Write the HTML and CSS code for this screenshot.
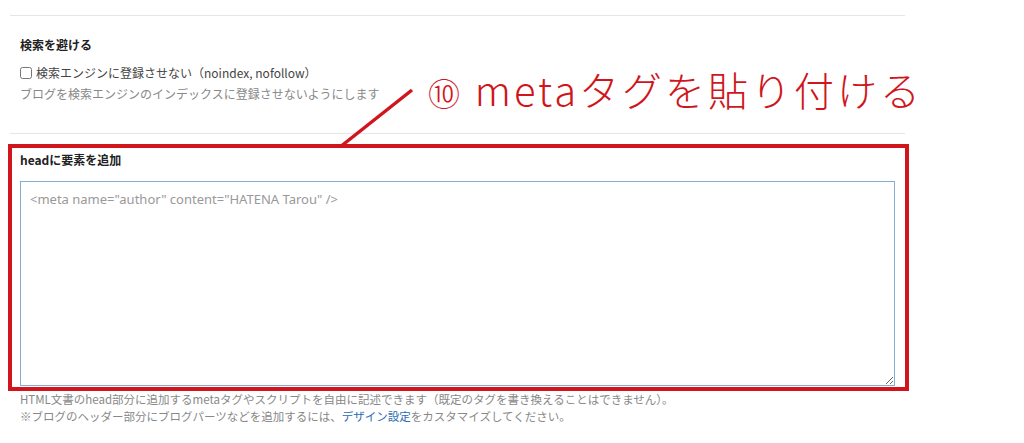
FILE: index.html
```html
<!DOCTYPE html>
<html>
  <head>
    <title>詳細設定</title>
    <link rel="stylesheet" href="styles.css">
  </head>
  <body>
    <div class="page">
      <hr class="divider" />
      <div class="section">
        <h3 class="sectionTitle">検索を避ける</h3>
        <label class="checkRow">
          <input type="checkbox" name="noindex" />
          検索エンジンに登録させない（noindex, nofollow）
        </label>
        <p class="help">ブログを検索エンジンのインデックスに登録させないようにします</p>
      </div>
      <hr class="divider divider2" />
      <div class="highlight">
        <h3 class="sectionTitle headTitle">headに要素を追加</h3>
        <textarea class="headArea" name="head" placeholder='<meta name="author" content="HATENA Tarou" />'></textarea>
      </div>
      <div class="notes">
        <p>HTML文書のhead部分に追加するmetaタグやスクリプトを自由に記述できます（既定のタグを書き換えることはできません）。</p>
        <p>※ブログのヘッダー部分にブログパーツなどを追加するには、<a href="#">デザイン設定</a>をカスタマイズしてください。</p>
      </div>
    </div>

    <div class="callout">
      <svg class="calloutLine" width="90" height="70" viewBox="0 0 90 70">
        <line x1="82" y1="3" x2="10" y2="60" stroke="#d0151c" stroke-width="3.5" />
      </svg>
      <span class="calloutText"><span class="num">⑩</span> metaタグを貼り付ける</span>
    </div>
  </body>
</html>
```

FILE: styles.css
```css
body {
  margin: 0;
  background-color: #fff;
  font-family: "Noto Sans CJK JP", "Noto Sans", sans-serif;
  font-size: 12px;
  color: #333;
}
.page {
  position: relative;
  width: 901px;
  padding-left: 8px;
  padding-top: 15px;
}
.divider {
  border: 0;
  border-top: 1px solid #e6e6e6;
  margin: 0 4px 0 2px;
}
.section {
  padding: 20px 12px 0;
}
.sectionTitle {
  margin: 0;
  font-size: 12px;
  font-weight: bold;
  line-height: 18px;
  color: #222;
}
.checkRow {
  display: flex;
  align-items: center;
  margin-top: 11px;
  line-height: 16px;
  color: #444;
}
.checkRow input {
  margin: 0 4px 0 0;
  width: 12px;
  height: 12px;
}
.help {
  margin: 5px 0 0;
  color: #888;
  line-height: 16px;
}
.divider2 {
  margin-top: 31px;
}
.highlight {
  margin-top: 10px;
  border: 4px solid #d0151c;
  padding: 3px 10px 0 8px;
  height: 236px;
  display: flex;
  flex-direction: column;
}
.headTitle {
  margin-bottom: 12px;
}
.headArea {
  flex: 1;
  margin: 0 0 1px;
  border: 1px solid #86acd0;
  padding: 8px 9px;
  font-family: "Noto Sans", "Noto Sans CJK JP", sans-serif;
  font-size: 13px;
  color: #333;
  resize: vertical;
}
.headArea::placeholder {
  color: #999;
}
.notes {
  padding: 0 12px;
  margin-top: 0;
  color: #888;
  font-size: 11.5px;
  line-height: 17px;
}
.notes p {
  margin: 0;
}
.notes a {
  color: #2b6cb0;
  text-decoration: none;
}
.callout {
  position: absolute;
  left: 330px;
  top: 60px;
}
.calloutLine {
  position: absolute;
  left: 0;
  top: 27px;
}
.calloutText {
  position: absolute;
  left: 98px;
  top: -3px;
  white-space: nowrap;
  color: #d0151c;
  font-family: "Noto Sans CJK JP", sans-serif;
  font-weight: 300;
  font-size: 40px;
  letter-spacing: 3px;
  line-height: 64px;
}
.num {
  font-size: 32px;
}
```
